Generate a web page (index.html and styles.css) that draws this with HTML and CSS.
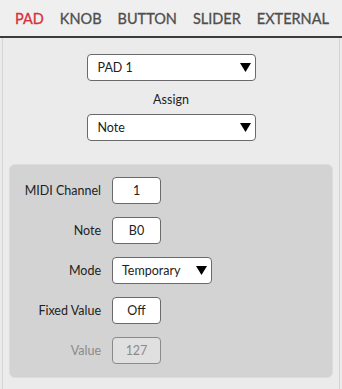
FILE: index.html
```html
<!DOCTYPE html>
<html lang="en">

<head>
  <title>Pad settings</title>
  <meta charset="utf-8">
  <meta name="viewport" content="width=device-width, initial-scale=1.0">
  <link rel="stylesheet" href="styles.css">
</head>

<body>
  <div class="tabs">
    <span class="tab active">PAD</span>
    <span class="tab">KNOB</span>
    <span class="tab">BUTTON</span>
    <span class="tab">SLIDER</span>
    <span class="tab">EXTERNAL</span>
  </div>

  <div class="main">
    <div class="select wide">
      <span>PAD 1</span>
      <svg class="arrow" width="11" height="9" viewBox="0 0 11 9"><path d="M0 0H11L5.5 9Z"/></svg>
    </div>
    <div class="caption">Assign</div>
    <div class="select wide">
      <span>Note</span>
      <svg class="arrow" width="11" height="9" viewBox="0 0 11 9"><path d="M0 0H11L5.5 9Z"/></svg>
    </div>

    <div class="panel">
      <label>MIDI Channel</label>
      <div class="field">1</div>

      <label>Note</label>
      <div class="field">B0</div>

      <label>Mode</label>
      <div class="select mode">
        <span>Temporary</span>
        <svg class="arrow" width="11" height="9" viewBox="0 0 11 9"><path d="M0 0H11L5.5 9Z"/></svg>
      </div>

      <label>Fixed Value</label>
      <div class="field">Off</div>

      <label class="disabled">Value</label>
      <div class="field disabled">127</div>
    </div>
  </div>
</body>

</html>
```

FILE: styles.css
```css
html,
body {
  padding: 0;
  margin: 0;
}

body {
  background: #ebebeb;
  color: #222;
  font: 12.5px/1.2 Lato, "Open Sans", sans-serif;
}

.tabs {
  display: flex;
  justify-content: space-between;
  align-items: center;
  height: 35px;
  padding: 1px 13px 0 15px;
  background: #efefef;
  border-bottom: 2px solid #3c3c3c;
}

.tab {
  font-size: 14.5px;
  color: #4e4e4e;
  -webkit-text-stroke: 0.3px #4e4e4e;
}

.tab.active {
  color: #d8303c;
  -webkit-text-stroke-color: #d8303c;
}

.main {
  margin: 0 2px;
  padding: 16px 6px 12px;
  border-left: 1px solid #d4d4d4;
  border-right: 1px solid #d4d4d4;
  display: flex;
  flex-direction: column;
  align-items: center;
}

.select {
  display: flex;
  align-items: center;
  justify-content: space-between;
  box-sizing: border-box;
  height: 27px;
  padding: 0 4px 0 10px;
  background: #fff;
  border: 1px solid #6a6a6a;
  border-radius: 4px;
}

.select.wide {
  width: 169px;
}

.select.mode {
  width: 100px;
  padding-left: 9px;
}

.caption {
  margin: 11px 0 7px;
}

.panel {
  align-self: stretch;
  margin-top: 23px;
  padding: 12px 0 13px;
  background: #d3d3d3;
  border: 1px solid #dcdcdc;
  border-radius: 6px;
  display: grid;
  grid-template-columns: 91px auto;
  grid-auto-rows: 27px;
  column-gap: 11px;
  row-gap: 13px;
  justify-items: start;
}

.panel label {
  justify-self: end;
  align-self: center;
}

.field {
  box-sizing: border-box;
  width: 49px;
  height: 27px;
  line-height: 25px;
  text-align: center;
  background: #fff;
  border: 1px solid #6a6a6a;
  border-radius: 4px;
}

.panel .disabled {
  color: #8a8a8a;
}

.field.disabled {
  background: #e0e0e0;
  border-color: #8a8a8a;
}
```
